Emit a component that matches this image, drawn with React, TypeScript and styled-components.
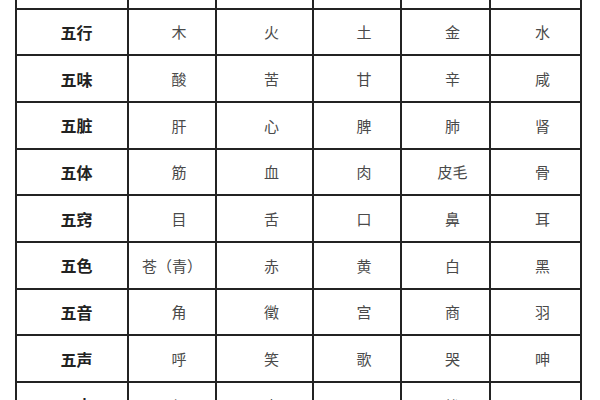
import styled, { createGlobalStyle } from 'styled-components';

const GlobalStyle = createGlobalStyle`
  html, body {
    margin: 0;
    padding: 0;
    background: #ffffff;
    overflow: hidden;
  }
`;

const Page = styled.div`
  width: 600px;
  height: 400px;
  overflow: hidden;
  background: #ffffff;
  padding-left: 15px;
  box-sizing: border-box;
`;

const Grid = styled.div`
  display: grid;
  width: max-content;
  grid-template-columns: 110px 86px 95px 86px 87px 89px;
  grid-auto-rows: 44.7px;
  gap: 2px;
  padding: 2px;
  margin-top: -39.2px;
  background: #232323;
  font-family: 'Noto Sans CJK SC', 'Noto Sans', sans-serif;
`;

const Cell = styled.div<{ $head?: boolean; $shift?: number }>`
  display: flex;
  align-items: center;
  justify-content: center;
  background: #ffffff;
  padding-left: ${(p) => (p.$shift ?? 14)}px;
  font-size: ${(p) => (p.$head ? '16px' : '15px')};
  font-weight: ${(p) => (p.$head ? 700 : 400)};
  color: ${(p) => (p.$head ? '#222222' : '#4a4a4a')};
  white-space: nowrap;
`;

const rows: string[][] = [
  ['五季', '春', '夏', '长夏', '秋', '冬'],
  ['五行', '木', '火', '土', '金', '水'],
  ['五味', '酸', '苦', '甘', '辛', '咸'],
  ['五脏', '肝', '心', '脾', '肺', '肾'],
  ['五体', '筋', '血', '肉', '皮毛', '骨'],
  ['五窍', '目', '舌', '口', '鼻', '耳'],
  ['五色', '苍（青）', '赤', '黄', '白', '黑'],
  ['五音', '角', '徵', '宫', '商', '羽'],
  ['五声', '呼', '笑', '歌', '哭', '呻'],
  ['五志', '怒', '喜', '思', '忧', '恐'],
];

export default function App() {
  return (
    <>
      <GlobalStyle />
      <Page>
        <Grid>
          {rows.map((row) =>
            row.map((text, i) => (
              <Cell
                key={row[0] + i}
                $head={i === 0}
                $shift={i === 0 ? 9 : text.length > 2 ? 0 : 14}
              >
                {text}
              </Cell>
            ))
          )}
        </Grid>
      </Page>
    </>
  );
}
